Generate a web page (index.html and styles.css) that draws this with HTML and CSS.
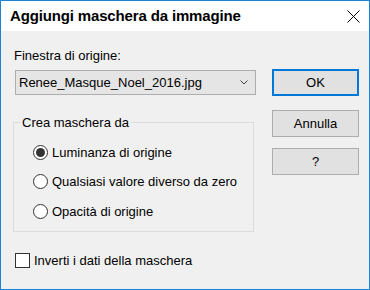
FILE: index.html
```html
<!DOCTYPE html>
<html lang="it">
<head>
<meta charset="utf-8">
<title>Aggiungi maschera da immagine</title>
<link rel="stylesheet" href="styles.css">
</head>
<body>
<div class="window">
  <div class="titlebar">
    <span class="title">Aggiungi maschera da immagine</span>
    <svg class="close" width="13" height="13" viewBox="0 0 13 13"><path d="M0.5 0.5 L12.5 12.5 M12.5 0.5 L0.5 12.5" stroke="#000" stroke-width="1" fill="none"/></svg>
  </div>
  <div class="content">
    <div class="left">
      <div class="label">Finestra di origine:</div>
      <div class="combo">
        <span class="combo-text">Renee_Masque_Noel_2016.jpg</span>
        <svg class="chev" width="8" height="5" viewBox="0 0 8 5"><path d="M0.5 0.5 L4 4 L7.5 0.5" stroke="#444" stroke-width="1" fill="none"/></svg>
      </div>
      <fieldset class="group">
        <legend>Crea maschera da</legend>
        <div class="radios">
          <div class="row"><span class="radio on"></span><span>Luminanza di origine</span></div>
          <div class="row"><span class="radio"></span><span>Qualsiasi valore diverso da zero</span></div>
          <div class="row"><span class="radio"></span><span>Opacità di origine</span></div>
        </div>
      </fieldset>
      <div class="check-row"><span class="check"></span><span>Inverti i dati della maschera</span></div>
    </div>
    <div class="right">
      <div class="btn default">OK</div>
      <div class="btn annulla">Annulla</div>
      <div class="btn">?</div>
    </div>
  </div>
</div>
</body>
</html>
```
FILE: styles.css
```css
* { box-sizing: border-box; }
html, body { margin: 0; padding: 0; }
body {
  width: 370px;
  height: 290px;
  font-family: "Liberation Sans", Arial, sans-serif;
  font-size: 13px;
  line-height: 15px;
  color: #000;
  background: #f0f0f0;
}
.window {
  width: 370px;
  height: 290px;
  border: 1px solid #1883d7;
  background: #f0f0f0;
  display: flex;
  flex-direction: column;
}
.titlebar {
  height: 30px;
  background: #fff;
  display: flex;
  align-items: center;
  justify-content: space-between;
  padding: 0 9px 0 9px;
}
.title {
  font-weight: bold;
  font-size: 15px;
  letter-spacing: -0.15px;
  line-height: 30px;
}
.close { display: block; margin-top: 1px; }
.content {
  display: flex;
  padding: 0 10px 0 12px;
  gap: 16px;
}
.left {
  width: 243px;
  padding-top: 17px;
}
.label {
  padding-left: 1px;
  height: 15px;
}
.combo {
  margin-top: 7px;
  margin-left: 2px;
  width: 241px;
  height: 25px;
  border: 1px solid #adadad;
  background: #e5e5e5;
  display: flex;
  align-items: center;
  justify-content: space-between;
  padding: 0 7px 0 3px;
}
.chev { display: block; }
.group {
  margin: 20px 0 0 0;
  width: 241px;
  min-width: 0;
  border: 1px solid #dcdcdc;
  padding: 14px 0 12px 0;
}
.group legend {
  margin-left: 6px;
  padding: 0 2px;
  line-height: 15px;
}
.radios {
  display: flex;
  flex-direction: column;
  gap: 13.5px;
  padding-left: 19px;
}
.row {
  display: flex;
  align-items: center;
  height: 16px;
  gap: 4px;
}
.radio {
  width: 15px;
  height: 15px;
  border: 1px solid #333;
  border-radius: 50%;
  background: #fff;
  display: flex;
  align-items: center;
  justify-content: center;
  flex: none;
}
.radio.on::after {
  content: "";
  width: 9px;
  height: 9px;
  border-radius: 50%;
  background: #333;
}
.check-row {
  margin-top: 21px;
  margin-left: 2px;
  display: flex;
  align-items: center;
  gap: 4px;
  height: 15px;
}
.check {
  width: 15px;
  height: 15px;
  border: 1px solid #333;
  background: #fff;
  flex: none;
}
.right {
  width: 87px;
  padding-top: 38px;
  display: flex;
  flex-direction: column;
}
.btn {
  height: 27px;
  border: 1px solid #adadad;
  background: #e1e1e1;
  display: flex;
  align-items: center;
  justify-content: center;
}
.btn.default {
  border: 2px solid #0078d7;
  margin-bottom: 14px;
}
.btn.annulla {
  margin-bottom: 11px;
}
```
